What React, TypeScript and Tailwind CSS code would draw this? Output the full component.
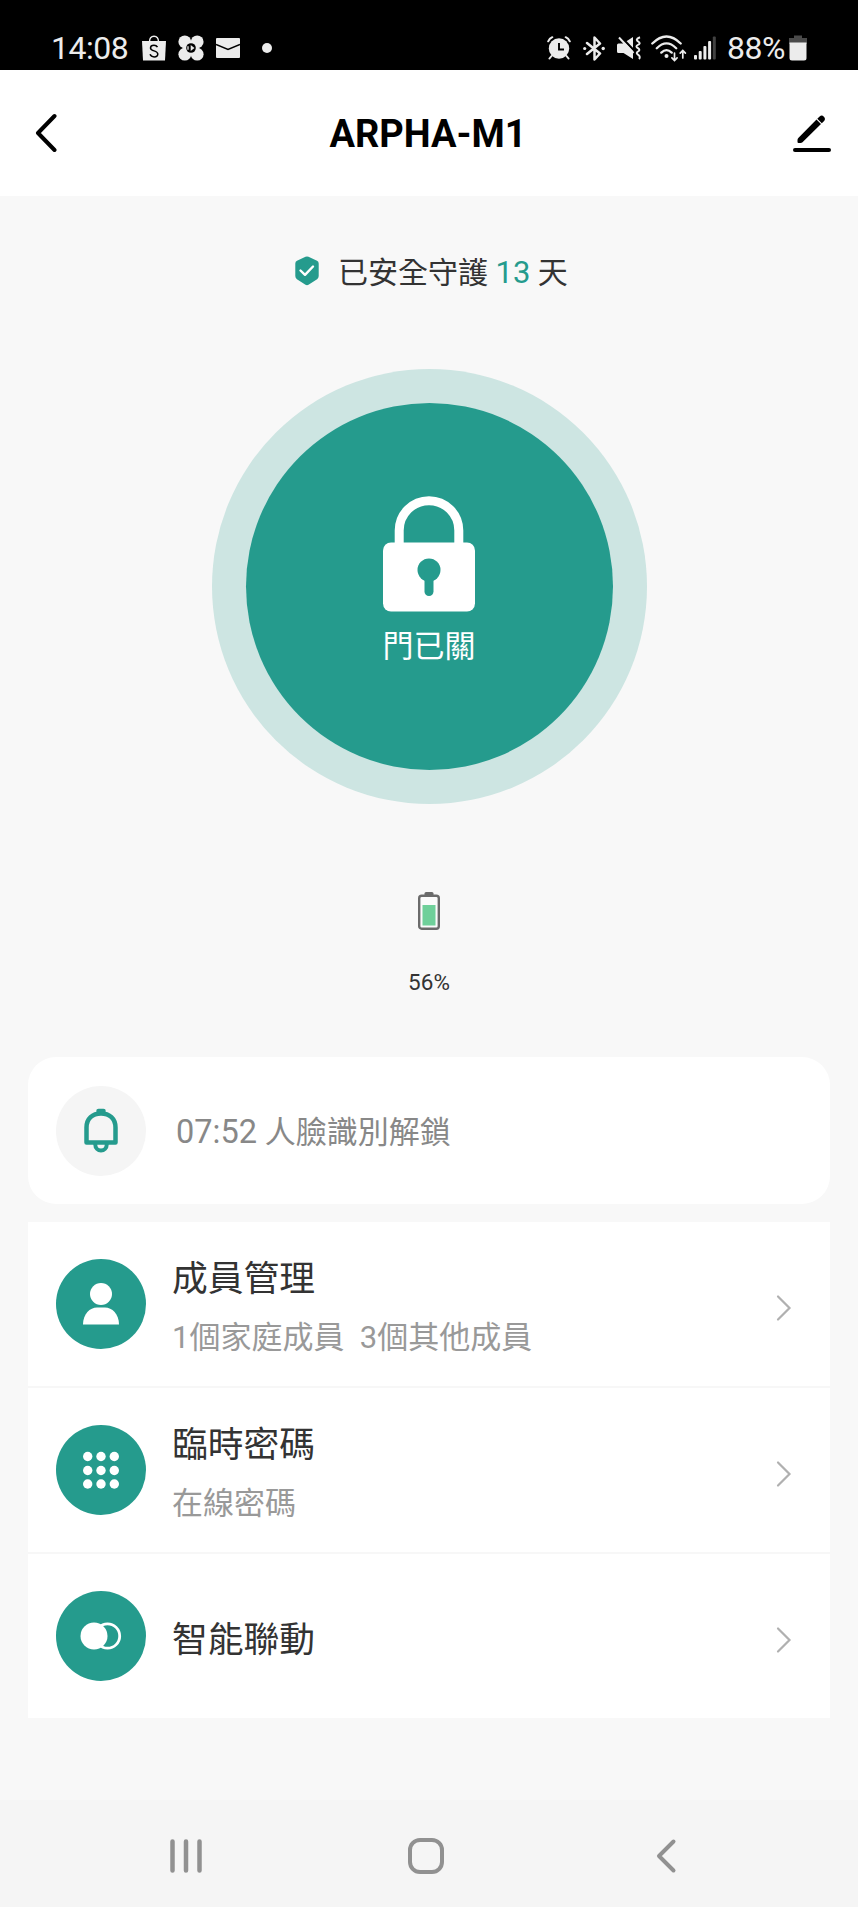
import { type ReactElement, type ReactNode } from "react";

export default function App(): ReactElement {
  return (
    <div
      lang="zh-Hant"
      className="flex h-[1907px] w-[858px] flex-col bg-[#f8f8f8] font-['Roboto','Noto_Sans_CJK_TC',sans-serif] text-[#333333]"
    >
      <StatusBar />
      <Header title="ARPHA-M1" />

      <main className="flex flex-1 flex-col">
        <GuardDays days={13} />
        <LockStatus label="門已關" />
        <BatteryLevel percent={56} />

        <div className="mt-[60px] flex flex-col gap-[18px] pr-[28px] pl-[28px]">
          <section className="flex h-[147px] items-center rounded-[28px] bg-white pl-[28px]">
            <div className="flex size-[90px] items-center justify-center rounded-full bg-[#f5f5f5]">
              <BellIcon />
            </div>
            <p className="pt-[4px] pl-[30px] text-[31px] leading-[40px] text-[#888888]">
              <span className="text-[32.5px]">07:52</span> 人臉識別解鎖
            </p>
          </section>

          <section className="flex flex-col divide-y-2 divide-[#f7f7f7] bg-white">
            <MenuRow
              icon={<MemberIcon />}
              title="成員管理"
              detail={"1個家庭成員\u00a0 3個其他成員"}
            />
            <MenuRow
              icon={<KeypadIcon />}
              title="臨時密碼"
              detail="在線密碼"
            />
            <MenuRow icon={<LinkageIcon />} title="智能聯動" />
          </section>
        </div>
      </main>

      <NavigationBar />
    </div>
  );
}

function StatusBar(): ReactElement {
  return (
    <div className="flex h-[70px] shrink-0 items-start justify-between bg-black pt-[28px] pr-[51px] pl-[51px] text-[32px] leading-[40px] tracking-[-0.5px] text-[#ececec]">
      <div className="flex items-center">
        <span className="w-[91px]">14:08</span>
        <svg width="24" height="26" viewBox="0 0 24 26" className="mr-[12px]">
          <path d="M0 6h24l-1 19.500H1z" fill="#ececec" />
          <path
            d="M7.500 7C7.500 3 9 1.200 12 1.200S16.500 3 16.500 7"
            fill="none"
            stroke="#ececec"
            strokeWidth="1.400"
          />
          <path
            d="M15.500 12.200C14.700 10.700 13.500 10.200 12 10.200c-2 0-3.500 1-3.500 2.700 0 3.700 7.300 2.300 7.300 6.100 0 1.800-1.600 2.900-3.700 2.900-2 0-3.400-.9-4.100-2.600"
            fill="none"
            stroke="#000"
            strokeWidth="1.500"
          />
        </svg>
        <svg width="26" height="26" viewBox="0 0 26 26" className="mr-[12px]">
          <g fill="#ececec">
            <circle cx="6.800" cy="6.800" r="6.400" />
            <circle cx="19.200" cy="6.800" r="6.400" />
            <circle cx="6.800" cy="19.200" r="6.400" />
            <circle cx="19.200" cy="19.200" r="6.400" />
            <circle cx="13" cy="13" r="7.500" />
          </g>
          <circle cx="13" cy="13" r="4.800" fill="#000" />
          <path d="M10 11.200v3.600" stroke="#ececec" strokeWidth="1.300" />
          <path d="M12.700 10 16.500 13l-3.800 3z" fill="#ececec" />
        </svg>
        <svg width="24" height="20" viewBox="0 0 24 20" className="mr-[22px]">
          <rect width="24" height="20" rx="1" fill="#ececec" />
          <path d="M0 6.500 12 11.500 24 6.500" fill="none" stroke="#000" strokeWidth="1.600" />
        </svg>
        <span className="size-[10px] rounded-full bg-[#ececec]" />
      </div>

      <div className="flex items-center">
        <svg width="24" height="24" viewBox="0 0 24 24" className="mr-[12px]">
          <circle cx="12" cy="12.500" r="10.200" fill="#ececec" />
          <path
            d="M1.200 5.300Q2.500 2.500 5.300 1.200M22.800 5.300Q21.500 2.500 18.700 1.200M4.500 20l-2 2.500M19.500 20l2 2.500"
            fill="none"
            stroke="#ececec"
            strokeWidth="2"
            strokeLinecap="round"
          />
          <path d="M12 7v6.500h5" fill="none" stroke="#000" strokeWidth="1.900" />
        </svg>
        <svg width="22" height="25" viewBox="0 0 22 25" className="mr-[12px]">
          <path
            d="m4 7 13 10.500-5.500 6v-22l5.500 6L4 18"
            fill="none"
            stroke="#ececec"
            strokeWidth="2.500"
            strokeLinejoin="round"
            strokeLinecap="round"
          />
          <circle cx="1.700" cy="12.500" r="1.600" fill="#ececec" />
          <circle cx="20.200" cy="12.500" r="1.700" fill="#ececec" />
        </svg>
        <svg width="24" height="24" viewBox="0 0 24 24" className="mr-[10px]">
          <path d="M0 9q0-1.500 1.500-1.500H6L16 1v22L6.500 17h-5Q0 17 0 15.500z" fill="#ececec" />
          <path d="m3.500.5 14.500 15" stroke="#000" strokeWidth="2.400" />
          <path d="m2 1.500 14.500 15.500" stroke="#ececec" strokeWidth="2" />
          <path
            d="M23 1.200c-4.500 1.800-3.500 3.200-1.500 4.600s1 2.200-.8 3.200-1.500 2 .3 3.200 1.800 2.200 0 3.300-1.500 2.200.3 3.300 1.700 3 .7 4.200"
            fill="none"
            stroke="#ececec"
            strokeWidth="2"
          />
        </svg>
        <svg width="36" height="27" viewBox="0 0 36 27" className="mr-[7px]">
          <g fill="none" stroke="#ececec" strokeWidth="2.300" strokeLinecap="round">
            <path d="M1.300 8.500Q15.500-5.500 29.700 8.500M5.800 13.200Q15.500 3.500 25.200 13.200M10.300 17.600q5.200-5 10.400 0" />
            <path
              strokeWidth="1.700"
              d="M23.500 18v7.500m-2.600-2.700 2.600 2.700 2.600-2.700M31.800 23v-7.500m-2.600 2.700 2.600-2.700 2.600 2.700"
            />
          </g>
          <circle cx="15.500" cy="21" r="2" fill="#ececec" />
        </svg>
        <svg width="22" height="24" viewBox="0 0 22 24" className="mr-[11px]">
          <g fill="#ececec">
            <rect y="19" width="3" height="4.500" rx="1" />
            <rect x="4.700" y="15" width="3" height="8.500" rx="1" />
            <rect x="9.400" y="10" width="3" height="13.500" rx="1" />
            <rect x="14.100" y="5" width="3" height="18.500" rx="1" />
            <rect x="18.800" y="0.500" width="3" height="23" rx="1" opacity=".28" />
          </g>
        </svg>
        <span className="w-[62px]">88%</span>
        <svg width="18" height="26" viewBox="0 0 18 26">
          <path d="M5 3V.500h8V3h5v6H0V3z" fill="#4a4a4a" />
          <path d="M0.500 7.500h17V23q0 2.500-2.500 2.500H3Q.5 25.500.5 23z" fill="#ececec" />
        </svg>
      </div>
    </div>
  );
}

interface HeaderProps {
  title: string;
}

function Header({ title }: HeaderProps): ReactElement {
  return (
    <header className="grid h-[126px] shrink-0 grid-cols-[100px_1fr_102px] items-center bg-white text-black">
      <button type="button" className="pl-[35px]" aria-label="返回">
        <svg width="22" height="40" viewBox="0 0 22 40">
          <path
            d="M19.500 3 3 20l16.500 17"
            fill="none"
            stroke="currentColor"
            strokeWidth="4"
            strokeLinecap="round"
            strokeLinejoin="round"
          />
        </svg>
      </button>
      <h1 className="pt-[2px] text-center text-[38px] leading-[48px] font-bold">
        {title}
      </h1>
      <button type="button" className="flex justify-end pr-[27px]" aria-label="編輯">
        <svg width="38" height="38" viewBox="0 0 38 38">
          <path
            d="M2 36h34"
            stroke="currentColor"
            strokeWidth="4"
            strokeLinecap="round"
          />
          <path
            d="M23.500 5.500 28 10 9.500 28.200q-.8.8-2 .8H5.500q-1 0-1-1v-2q0-1.200.8-2z"
            fill="currentColor"
          />
          <path
            d="M24.300 4.700 26.600 2.400a3.200 3.200 0 0 1 4.500 4.500L28.800 9.200z"
            fill="currentColor"
          />
        </svg>
      </button>
    </header>
  );
}

function GuardDays({ days }: { days: number }): ReactElement {
  return (
    <div className="mt-[55px] flex h-[40px] items-center pl-[295px] text-[30px] leading-[40px]">
      <svg width="24" height="30" viewBox="0 0 24 30" className="mr-[19px]">
        <path
          d="M10.500.8q1.500-.8 3 0l8.500 4q1.700.8 1.700 2.700V20q0 2-1.600 3.200l-8.600 5.600q-1.500.9-3 0l-8.600-5.600Q.3 22 .3 20V7.500q0-1.900 1.700-2.700z"
          fill="#259b8d"
        />
        <path
          d="m5.500 14.500 4.500 4.300 8-8.300"
          fill="none"
          stroke="#fff"
          strokeWidth="2.400"
          strokeLinecap="round"
          strokeLinejoin="round"
        />
      </svg>
      <p className="pt-[3px]">
        已安全守護 <span className="text-[31px] text-[#259b8d]">{days}</span> 天
      </p>
    </div>
  );
}

function LockStatus({ label }: { label: string }): ReactElement {
  return (
    <div className="mx-auto mt-[78px] flex size-[435px] shrink-0 items-center justify-center rounded-full bg-[#cde5e2]">
      <div className="flex size-[367px] flex-col items-center rounded-full bg-[#259b8d] pt-[93px] text-white">
        <svg width="92" height="116" viewBox="0 0 92 116">
          <path
            d="M16.200 50V34.500a29.800 29.800 0 0 1 59.600 0V50"
            fill="none"
            stroke="currentColor"
            strokeWidth="9"
          />
          <rect y="46.500" width="92" height="69" rx="8" fill="currentColor" />
          <circle cx="46" cy="74" r="11.500" fill="#259b8d" />
          <path
            d="M46 78v17.500"
            stroke="#259b8d"
            strokeWidth="9"
            strokeLinecap="round"
          />
        </svg>
        <span className="mt-[15px] text-[31px] leading-[40px]">{label}</span>
      </div>
    </div>
  );
}

function BatteryLevel({ percent }: { percent: number }): ReactElement {
  return (
    <div className="mt-[87px] flex flex-col items-center">
      <svg width="24" height="40" viewBox="0 0 24 40">
        <rect x="7.500" y="1" width="9" height="4" rx="1.500" fill="#6b6b6b" />
        <rect
          x="2.200"
          y="4.700"
          width="19.600"
          height="33"
          rx="2.500"
          fill="#fbfbfb"
          stroke="#6b6b6b"
          strokeWidth="2.400"
        />
        <rect x="5.500" y="14" width="13" height="20.500" fill="#6fd09a" />
      </svg>
      <span className="mt-[36px] text-[22.500px] leading-[30px]">
        {percent}%
      </span>
    </div>
  );
}

interface MenuRowProps {
  icon: ReactNode;
  title: string;
  detail?: string;
}

function MenuRow({ icon, title, detail }: MenuRowProps): ReactElement {
  return (
    <div className="flex h-[166px] items-center pr-[38px] pl-[28px] last:h-[164px]">
      <div className="flex size-[90px] items-center justify-center rounded-full bg-[#259b8d] text-white">
        {icon}
      </div>
      <div className="flex flex-1 flex-col gap-[17px] pt-[7px] pl-[26px]">
        <h2 className="text-[35.750px] leading-[44px]">{title}</h2>
        {detail !== undefined && (
          <p className="text-[31px] leading-[40px] text-[#999999]">{detail}</p>
        )}
      </div>
      <svg width="16" height="28" viewBox="0 0 16 28" className="mt-[7px]">
        <path
          d="m2 2.500 11.500 11.500L2 25.500"
          fill="none"
          stroke="#b0b0b0"
          strokeWidth="2.200"
          strokeLinecap="round"
        />
      </svg>
    </div>
  );
}

function BellIcon(): ReactElement {
  return (
    <svg width="36" height="46" viewBox="0 0 36 46">
      <g fill="none" stroke="#259b8d" strokeWidth="4.500" strokeLinejoin="round">
        <path d="M3.500 34.500V19.500C3.500 10.500 9.500 5.500 18 5.500S32.500 10.500 32.500 19.500v15z" />
        <path d="M15.500 3h5" strokeLinecap="round" />
        <path d="M12.200 36c0 8.700 11.600 8.700 11.600 0" strokeWidth="4" />
      </g>
    </svg>
  );
}

function MemberIcon(): ReactElement {
  return (
    <svg width="36" height="42" viewBox="0 0 36 42" fill="currentColor">
      <circle cx="18" cy="11" r="11" />
      <path d="M0 41.500C0 31 7 24.500 14 24.500h8c7 0 14 6.500 14 17z" />
    </svg>
  );
}

function KeypadIcon(): ReactElement {
  return (
    <svg width="36" height="38" viewBox="0 0 36 38" fill="currentColor">
      {[5.5, 19.5, 33].map((cy) =>
        [4.7, 18, 31.3].map((cx) => (
          <circle key={`${cx}-${cy}`} cx={cx} cy={cy} r="4.700" />
        )),
      )}
    </svg>
  );
}

function LinkageIcon(): ReactElement {
  return (
    <svg width="42" height="28" viewBox="0 0 42 28">
      <circle cx="14" cy="14" r="13.500" fill="currentColor" />
      <circle
        cx="27.500"
        cy="14"
        r="12.200"
        fill="none"
        stroke="currentColor"
        strokeWidth="2.800"
      />
    </svg>
  );
}

function NavigationBar(): ReactElement {
  return (
    <nav className="flex h-[107px] shrink-0 items-center bg-[#f5f5f5] pt-[4px] pl-[168px]">
      <svg width="36" height="40" viewBox="0 0 36 40" className="mr-[202px]">
        <path
          d="M4.500 5.500v29M18 5.500v29M31.500 5.500v29"
          stroke="#919191"
          strokeWidth="4.500"
          strokeLinecap="round"
        />
      </svg>
      <svg width="40" height="40" viewBox="0 0 40 40" className="mr-[208px]">
        <rect
          x="4"
          y="4"
          width="32"
          height="32"
          rx="10"
          fill="none"
          stroke="#919191"
          strokeWidth="4"
        />
      </svg>
      <svg width="24" height="40" viewBox="0 0 24 40">
        <path
          d="M19.500 5.500 5 20l14.500 14.500"
          fill="none"
          stroke="#919191"
          strokeWidth="4"
          strokeLinecap="round"
          strokeLinejoin="round"
        />
      </svg>
    </nav>
  );
}
